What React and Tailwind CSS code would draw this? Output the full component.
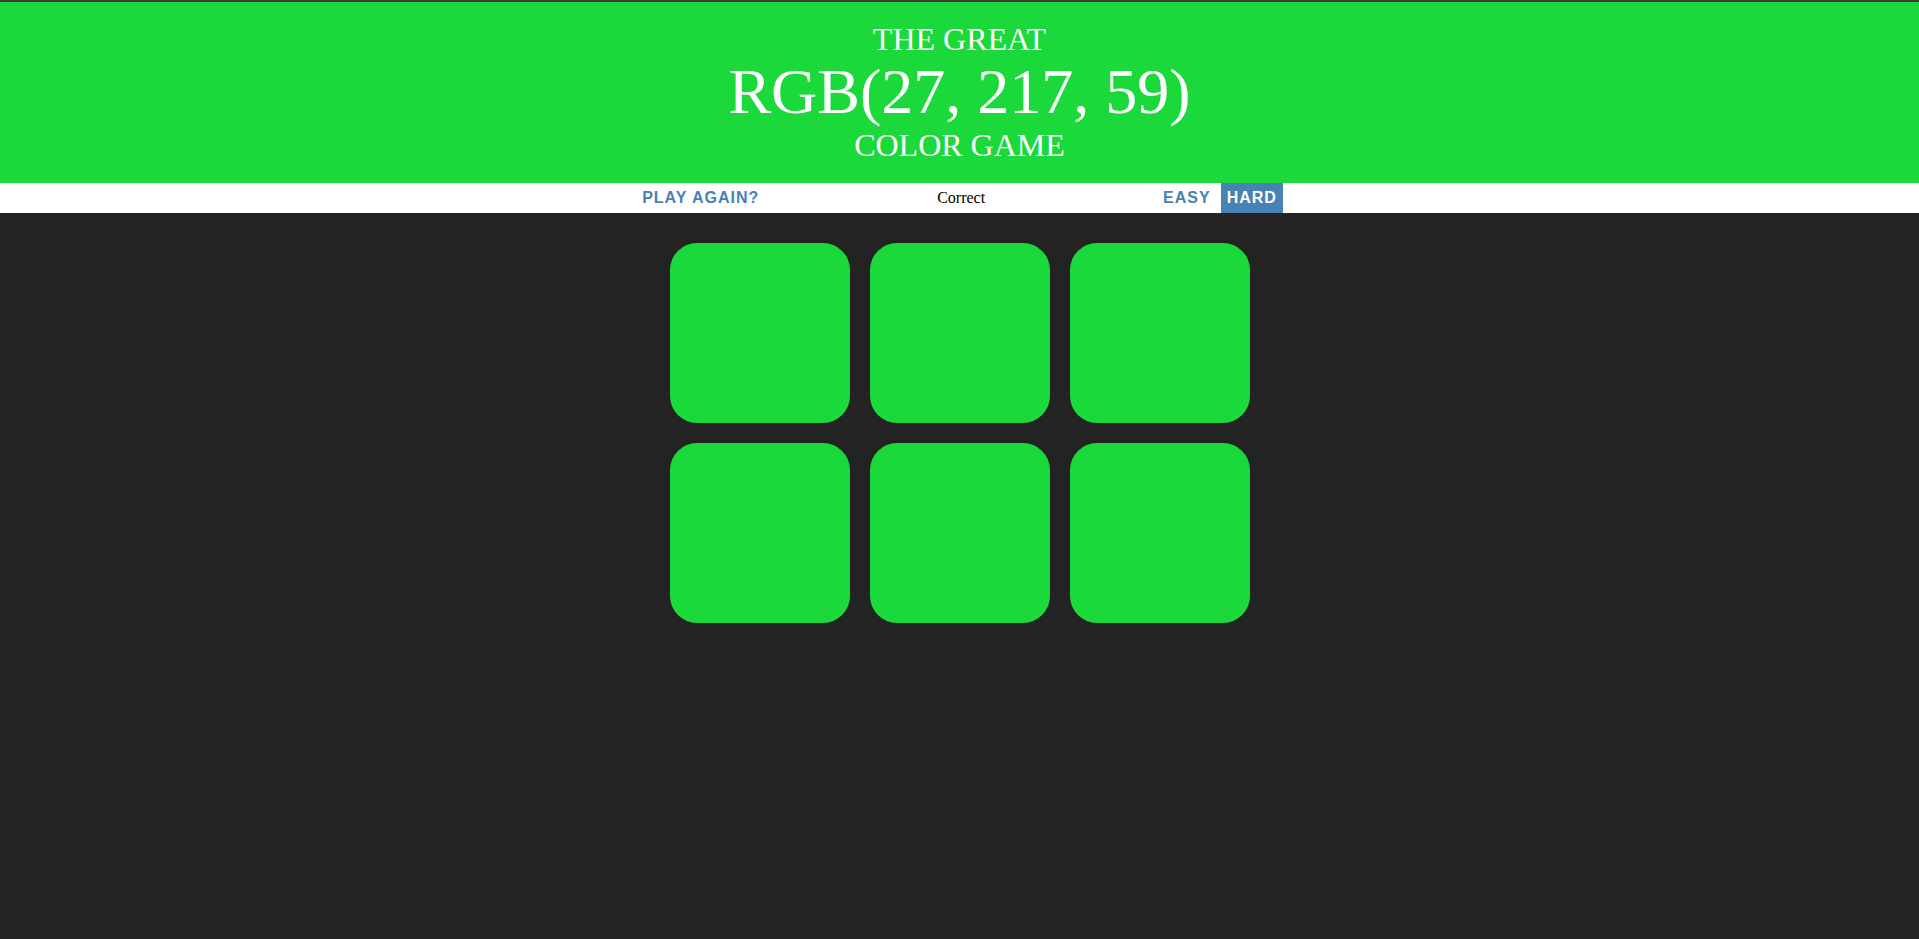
import React from 'react';

const squares = Array.from({ length: 6 }, () => 'rgb(27, 217, 59)');

export default function App() {
  return (
    <div className="min-h-screen bg-[#232323] font-['Liberation_Serif',serif]">
      {/* Header - shows the target colour */}
      <h1 className="border-t-2 border-[#3d3d3d] bg-[#1bd93b] py-[20px] text-center font-normal uppercase leading-[1.1] text-white">
        <div className="text-[32px]">The Great</div>
        <div className="text-[64px]">RGB(27, 217, 59)</div>
        <div className="text-[32px]">Color Game</div>
      </h1>

      <div className="flex h-[30px] items-stretch justify-center gap-[4px] bg-white text-[16px]">
        <button className="px-[6px] font-['Liberation_Sans',Arial,sans-serif] text-[16px] font-bold uppercase tracking-[1px] text-[#4682b4]">
          Play Again?
        </button>
        <span className="flex w-[20%] items-center justify-center text-black">Correct</span>
        <button className="px-[6px] font-['Liberation_Sans',Arial,sans-serif] text-[16px] font-bold uppercase tracking-[1px] text-[#4682b4]">
          Easy
        </button>
        <button className="bg-[#4682b4] px-[6px] font-['Liberation_Sans',Arial,sans-serif] text-[16px] font-bold uppercase tracking-[1px] text-white">
          Hard
        </button>
      </div>

      <div className="mx-auto mt-[20px] grid w-[600px] grid-cols-3 gap-[20px] p-[10px]">
        {squares.map((c, i) => (
          <div key={i} className="aspect-square rounded-[27px]" style={{ backgroundColor: c }} />
        ))}
      </div>
    </div>
  );
}
